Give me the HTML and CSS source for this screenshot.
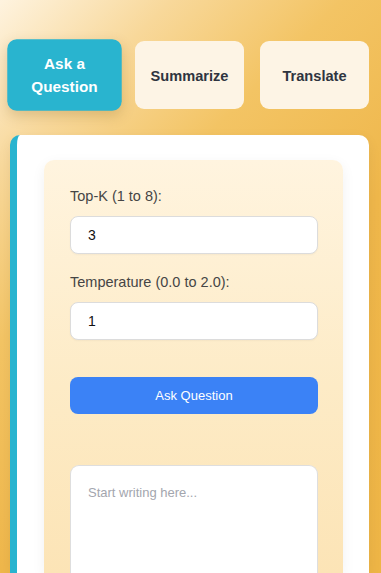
FILE: index.html
```html
<!DOCTYPE html>
<html lang="en">
<head>
<meta charset="utf-8">
<title>Ask a Question</title>
<link rel="stylesheet" href="styles.css">
</head>
<body>
<div class="page">
  <nav class="tabs">
    <button class="tab tab-active">Ask a Question</button>
    <button class="tab">Summarize</button>
    <button class="tab">Translate</button>
  </nav>
  <section class="card">
    <div class="panel">
      <label class="field-label" for="topk">Top-K (1 to 8):</label>
      <input class="field-input" id="topk" type="text" value="3">
      <label class="field-label second" for="temp">Temperature (0.0 to 2.0):</label>
      <input class="field-input" id="temp" type="text" value="1">
      <button class="ask-btn">Ask Question</button>
      <textarea class="writer" placeholder="Start writing here..."></textarea>
    </div>
  </section>
</div>
</body>
</html>
```
FILE: styles.css
```css
* { box-sizing: border-box; }
html, body { margin: 0; padding: 0; }
body {
  height: 573px;
  font-family: "Liberation Sans", Arial, sans-serif;
  background: linear-gradient(135deg, #fef3df 0%, #f8d89a 18%, #f3c464 36%, #efb74b 60%, #eeb546 100%);
  overflow: hidden;
}
.page {
  padding: 41px 12px 0 10px;
}
.tabs {
  display: grid;
  grid-template-columns: repeat(3, 1fr);
  gap: 16px;
}
.tab {
  height: 68px;
  min-width: 0;
  border: none;
  border-radius: 9px;
  background: #fdf4e5;
  color: #2f3440;
  font-family: "Liberation Sans", Arial, sans-serif;
  font-weight: 700;
  font-size: 14.6px;
  line-height: 1.5;
  padding: 3px 18px 0;
  display: flex;
  align-items: center;
  justify-content: center;
  text-align: center;
}
.tab-active {
  background: #29b4cf;
  color: #ffffff;
  padding-top: 1px;
  transform: scale(1.05);
  box-shadow: 0 5px 12px rgba(120, 80, 20, 0.22);
}
.card {
  margin-top: 26px;
  background: #ffffff;
  border-left: 7px solid #29b4cf;
  border-radius: 10px 10px 0 0;
  padding: 25px 26px 0 27px;
  height: 438px;
  overflow: hidden;
  box-shadow: 0 4px 14px rgba(0, 0, 0, 0.06);
}
.panel {
  background: linear-gradient(180deg, #fff4df 0%, #fdebc6 55%, #fce4b6 100%);
  border-radius: 10px 10px 0 0;
  padding: 28px 25px 0 26px;
  height: 413px;
  display: flex;
  flex-direction: column;
  box-shadow: 0 4px 14px rgba(0, 0, 0, 0.06);
}
.panel > * { flex-shrink: 0; }
.field-label {
  font-size: 14.5px;
  line-height: 17px;
  color: #454545;
  margin-bottom: 11px;
}
.field-label.second { margin-top: 20px; }
.field-input {
  height: 38px;
  border: 1px solid #dcdcdc;
  border-radius: 8px;
  background: #ffffff;
  padding: 0 17px;
  font-family: "Liberation Sans", Arial, sans-serif;
  font-size: 14px;
  color: #111;
  box-shadow: 0 1px 2px rgba(0, 0, 0, 0.04);
}
.ask-btn {
  margin-top: 37px;
  height: 37px;
  border: none;
  border-radius: 8px;
  background: #3b82f6;
  color: #ffffff;
  font-family: "Liberation Sans", Arial, sans-serif;
  font-size: 13px;
}
.writer {
  margin-top: 51px;
  flex: 1 0 auto;
  height: 110px;
  border: 1px solid #dedede;
  border-bottom: none;
  border-radius: 9px 9px 0 0;
  background: #ffffff;
  padding: 18px 17px;
  font-family: "Liberation Sans", Arial, sans-serif;
  font-size: 13px;
  line-height: 17px;
  resize: none;
}
.writer::placeholder { color: #a3a6ae; }
```
